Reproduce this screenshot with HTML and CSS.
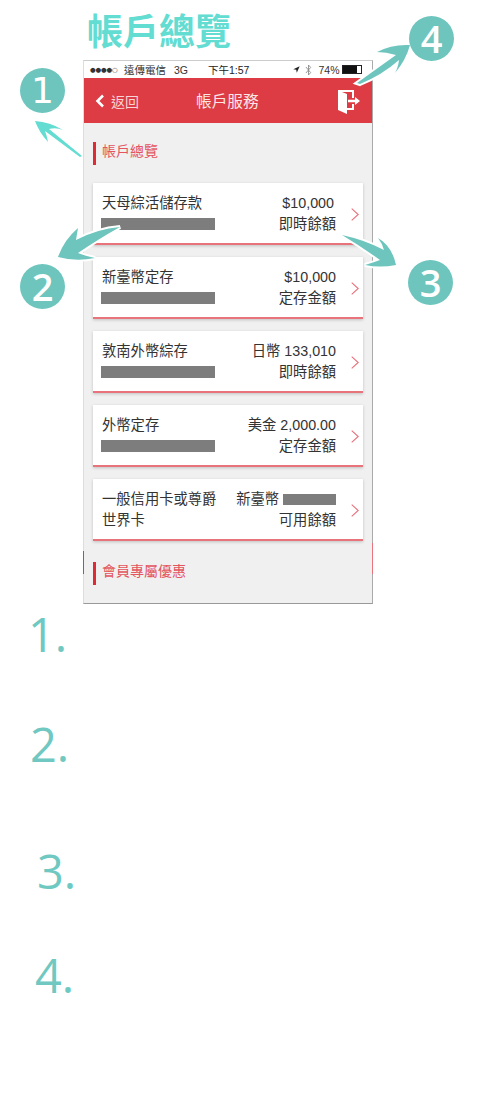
FILE: index.html
```html
<!DOCTYPE html>
<html>

<head>
  <meta charset="utf-8">
  <link rel="stylesheet" href="styles.css">
</head>

<body>
  <h1 class="page-title">帳戶總覽</h1>

  <div class="phone">
    <div class="status-bar">
      <span class="dots">●●●●○</span>
      <span class="carrier">遠傳電信</span>
      <span class="network">3G</span>
      <span class="clock">下午1:57</span>
      <span class="status-right">
        <svg class="loc-icon" viewBox="0 0 10 10"><path d="M9.5 .5 L.5 4.6 L4.6 5.2 L5.4 9.5 Z" /></svg>
        <svg class="bt-icon" viewBox="0 0 8 14"><path d="M1 3.5 L6.5 10 L4 12.8 V1.2 L6.5 4 L1 10.5" /></svg>
        <span class="percent">74%</span>
        <span class="battery"><span class="battery-fill"></span></span>
      </span>
    </div>

    <div class="nav-bar">
      <span class="back">
        <svg class="back-icon" viewBox="0 0 10 14"><path d="M8 1.5 L2.5 7 L8 12.5" /></svg>
        返回
      </span>
      <span class="nav-title">帳戶服務</span>
      <svg class="exit-icon" viewBox="0 0 22 24">
        <path d="M0 0 H16 V8 H14 V2 H4 L9 4 V24 L0 20 Z" />
        <path d="M14 14 H16 V20 H9 V18 H14 Z" />
        <path d="M10 9.8 H17 V7 L22 11 L17 15 V12.2 H10 Z" />
      </svg>
    </div>

    <div class="content">
      <h2 class="section-head">帳戶總覽</h2>

      <div class="card">
        <div class="card-left">
          <div class="card-name">天母綜活儲存款</div>
          <div class="masked"></div>
        </div>
        <div class="card-right nudge">
          <div class="amount">$10,000</div>
          <div class="label">即時餘額</div>
        </div>
        <svg class="chevron" viewBox="0 0 8 13"><path d="M.7 .7 L7.2 6.5 L.7 12.3" /></svg>
      </div>

      <div class="card">
        <div class="card-left">
          <div class="card-name">新臺幣定存</div>
          <div class="masked"></div>
        </div>
        <div class="card-right">
          <div class="amount">$10,000</div>
          <div class="label">定存金額</div>
        </div>
        <svg class="chevron" viewBox="0 0 8 13"><path d="M.7 .7 L7.2 6.5 L.7 12.3" /></svg>
      </div>

      <div class="card">
        <div class="card-left">
          <div class="card-name">敦南外幣綜存</div>
          <div class="masked"></div>
        </div>
        <div class="card-right">
          <div class="amount">日幣 133,010</div>
          <div class="label">即時餘額</div>
        </div>
        <svg class="chevron" viewBox="0 0 8 13"><path d="M.7 .7 L7.2 6.5 L.7 12.3" /></svg>
      </div>

      <div class="card">
        <div class="card-left">
          <div class="card-name">外幣定存</div>
          <div class="masked"></div>
        </div>
        <div class="card-right">
          <div class="amount">美金 2,000.00</div>
          <div class="label">定存金額</div>
        </div>
        <svg class="chevron" viewBox="0 0 8 13"><path d="M.7 .7 L7.2 6.5 L.7 12.3" /></svg>
      </div>

      <div class="card">
        <div class="card-left">
          <div class="card-name">一般信用卡或尊爵</div>
          <div class="card-name">世界卡</div>
        </div>
        <div class="card-right">
          <div class="amount">新臺幣 <span class="masked-inline"></span></div>
          <div class="label">可用餘額</div>
        </div>
        <svg class="chevron" viewBox="0 0 8 13"><path d="M.7 .7 L7.2 6.5 L.7 12.3" /></svg>
      </div>

      <h2 class="section-head lower">會員專屬優惠</h2>
    </div>
  </div>

  <div class="notes">
    <div class="note n1">1.</div>
    <div class="note n2">2.</div>
    <div class="note n3">3.</div>
    <div class="note n4">4.</div>
  </div>

  <!-- hand drawn arrows on top of the screenshot -->
  <svg class="arrows" viewBox="0 0 480 1100">
    <path class="arrow-light" d="M82 156 L49 129 Q56 127 63 130 Q50 122 35 121 Q39 132 48 142 Q47 136 45 131 L80 157 Z" />
    <path class="arrow-halo" d="M120 227 Q97 229 76 240 Q77 234 78 228 Q64 240 58 257 Q76 262 95 258 Q85 256 78 253 Q100 238 120 227 Z" />
    <path class="arrow" d="M120 227 Q97 229 76 240 Q77 234 78 228 Q64 240 58 257 Q76 262 95 258 Q85 256 78 253 Q100 238 120 227 Z" />
    <path class="arrow-halo" d="M342 235 Q365 240 384 250 Q382 243 378 238 Q392 246 396 265 Q380 268 365 265 Q375 262 380 260 Q362 247 342 235 Z" />
    <path class="arrow" d="M342 235 Q365 240 384 250 Q382 243 378 238 Q392 246 396 265 Q380 268 365 265 Q375 262 380 260 Q362 247 342 235 Z" />
    <path class="arrow-halo" d="M357 83 Q382 65 396 55 Q386 52 377 52 Q392 44 410 45 Q406 60 395 73 Q398 68 399 60 Q382 75 360 84 Z" />
    <path class="arrow" d="M357 83 Q382 65 396 55 Q386 52 377 52 Q392 44 410 45 Q406 60 395 73 Q398 68 399 60 Q382 75 360 84 Z" />
  </svg>

  <div class="badge b1">1</div>
  <div class="badge b2">2</div>
  <div class="badge b3">3</div>
  <div class="badge b4">4</div>

  <div class="stray stray-left"></div>
  <div class="stray stray-right"></div>
</body>

</html>
```
FILE: styles.css
```css
* {
  margin: 0;
  padding: 0;
  box-sizing: border-box;
}

html,
body {
  width: 480px;
  height: 1100px;
  overflow: hidden;
}

body {
  position: relative;
  background: #fff;
  color: #333;
  font-family: "Liberation Sans", "Noto Sans CJK TC", sans-serif;
}

.page-title {
  height: 60px;
  padding: 7px 0 0 87px;
  font-size: 36px;
  line-height: 44px;
  font-weight: 700;
  color: #63dcd2;
  font-family: "Noto Sans CJK TC", sans-serif;
}

.phone {
  width: 290px;
  height: 544px;
  margin-left: 83px;
  display: flex;
  flex-direction: column;
  background: #f0f0f0;
  border-top: 1px solid #ccc;
  border-left: 1px solid #ddd;
  border-right: 1px solid #aaa;
  border-bottom: 1px solid #999;
}

.status-bar {
  height: 17px;
  flex: none;
  display: flex;
  align-items: center;
  background: #fff;
  padding-left: 6px;
  font-size: 10.5px;
  color: #333;
}

.dots {
  width: 34px;
  font-family: "DejaVu Sans", sans-serif;
  font-size: 6.5px;
  letter-spacing: -.2px;
  white-space: nowrap;
}

.network {
  margin-left: 8px;
}

.clock {
  margin-left: 20px;
  color: #222;
}

.status-right {
  display: flex;
  align-items: center;
  margin-left: 44px;
}

.loc-icon {
  width: 7px;
  height: 7px;
  fill: #222;
}

.bt-icon {
  width: 7px;
  height: 12px;
  margin-left: 5px;
  fill: none;
  stroke: #888;
  stroke-width: 1;
}

.percent {
  margin-left: 6px;
}

.battery {
  width: 20px;
  height: 9px;
  margin-left: 3px;
  border: 1px solid #222;
  background: #fff;
  display: block;
}

.battery-fill {
  display: block;
  width: 14px;
  height: 7px;
  background: #111;
}

.nav-bar {
  height: 45px;
  flex: none;
  display: flex;
  align-items: center;
  position: relative;
  background: #dd3c44;
  color: #fff;
}

.back {
  display: flex;
  align-items: center;
  gap: 6px;
  margin-left: 11px;
  font-size: 14px;
  color: #f6d5d6;
  font-family: "Noto Sans CJK TC", sans-serif;
}

.back-icon {
  width: 10px;
  height: 14px;
  fill: none;
  stroke: #fff;
  stroke-width: 2.6;
}

.nav-title {
  margin-left: 57px;
  font-size: 15.7px;
  color: #fbe6e6;
  font-family: "Noto Sans CJK TC", sans-serif;
}

.exit-icon {
  position: absolute;
  left: 254px;
  top: 12px;
  width: 22px;
  height: 24px;
  fill: #fff;
}

.content {
  flex: 1;
  padding: 19px 9px 0;
}

.section-head {
  height: 23px;
  padding-left: 6px;
  margin-bottom: 18px;
  border-left: 3px solid #dd2c36;
  font-size: 14px;
  line-height: 17px;
  font-weight: 400;
  color: #e4555f;
  font-family: "Noto Sans CJK TC", sans-serif;
}

.section-head.lower {
  margin-top: 21px;
}

.card {
  height: 62px;
  margin-bottom: 12px;
  width: 270px;
  display: flex;
  align-items: flex-start;
  position: relative;
  background: #fff;
  border-bottom: 2px solid #e8737a;
  box-shadow: 0 1px 3px rgba(0, 0, 0, .2);
  padding: 9.5px 27px 0 9px;
  font-size: 14.3px;
  line-height: 21.5px;
}

.card-left {
  flex: 1;
}

.masked {
  width: 114px;
  height: 11.5px;
  margin: 4px 0 0 -1px;
  background: #7d7d7d;
}

.masked-inline {
  display: inline-block;
  width: 53px;
  height: 11px;
  vertical-align: -1px;
  background: #7d7d7d;
}

.card-right {
  text-align: right;
  white-space: nowrap;
}

.card-right.nudge .amount {
  margin-right: 2px;
}

.chevron {
  position: absolute;
  right: 4px;
  top: 25px;
  width: 8px;
  height: 13px;
  fill: none;
  stroke: #e8707a;
  stroke-width: 1.1;
}

.notes {
  position: relative;
  font-family: "Open Sans", sans-serif;
  font-weight: 400;
  color: #6fc8c1;
  font-size: 47px;
  line-height: 50px;
}

.note.n1 {
  margin: 5px 0 0 28px;
}

.note.n2 {
  margin: 60px 0 0 30px;
}

.note.n3 {
  margin: 77px 0 0 37px;
}

.note.n4 {
  margin: 54px 0 0 35px;
}

.arrows {
  position: absolute;
  left: 0;
  top: 0;
  width: 480px;
  height: 1100px;
}

.arrow-light {
  fill: #63dcd2;
}

.arrow {
  fill: #6dc5be;
}

.arrow-halo {
  fill: #fff;
  stroke: #fff;
  stroke-width: 4;
}

.badge {
  position: absolute;
  width: 45px;
  height: 45px;
  border-radius: 50%;
  background: #6dc5be;
  color: #fff;
  font-family: "Open Sans", sans-serif;
  font-weight: 600;
  font-size: 38px;
  line-height: 45px;
  text-align: center;
}

.b1 {
  left: 20px;
  top: 68px;
  font-family: "DejaVu Sans", sans-serif;
  font-weight: 400;
  font-size: 36px;
}

.b2 {
  left: 20px;
  top: 264px;
}

.b3 {
  left: 408px;
  top: 260px;
}

.b4 {
  left: 409px;
  top: 16px;
}

.stray {
  position: absolute;
  width: 1px;
  background: #e8737a;
}

.stray-left {
  left: 83px;
  top: 551px;
  height: 23px;
  background: #dd3c44;
}

.stray-right {
  left: 372px;
  top: 543px;
  height: 31px;
}
```
